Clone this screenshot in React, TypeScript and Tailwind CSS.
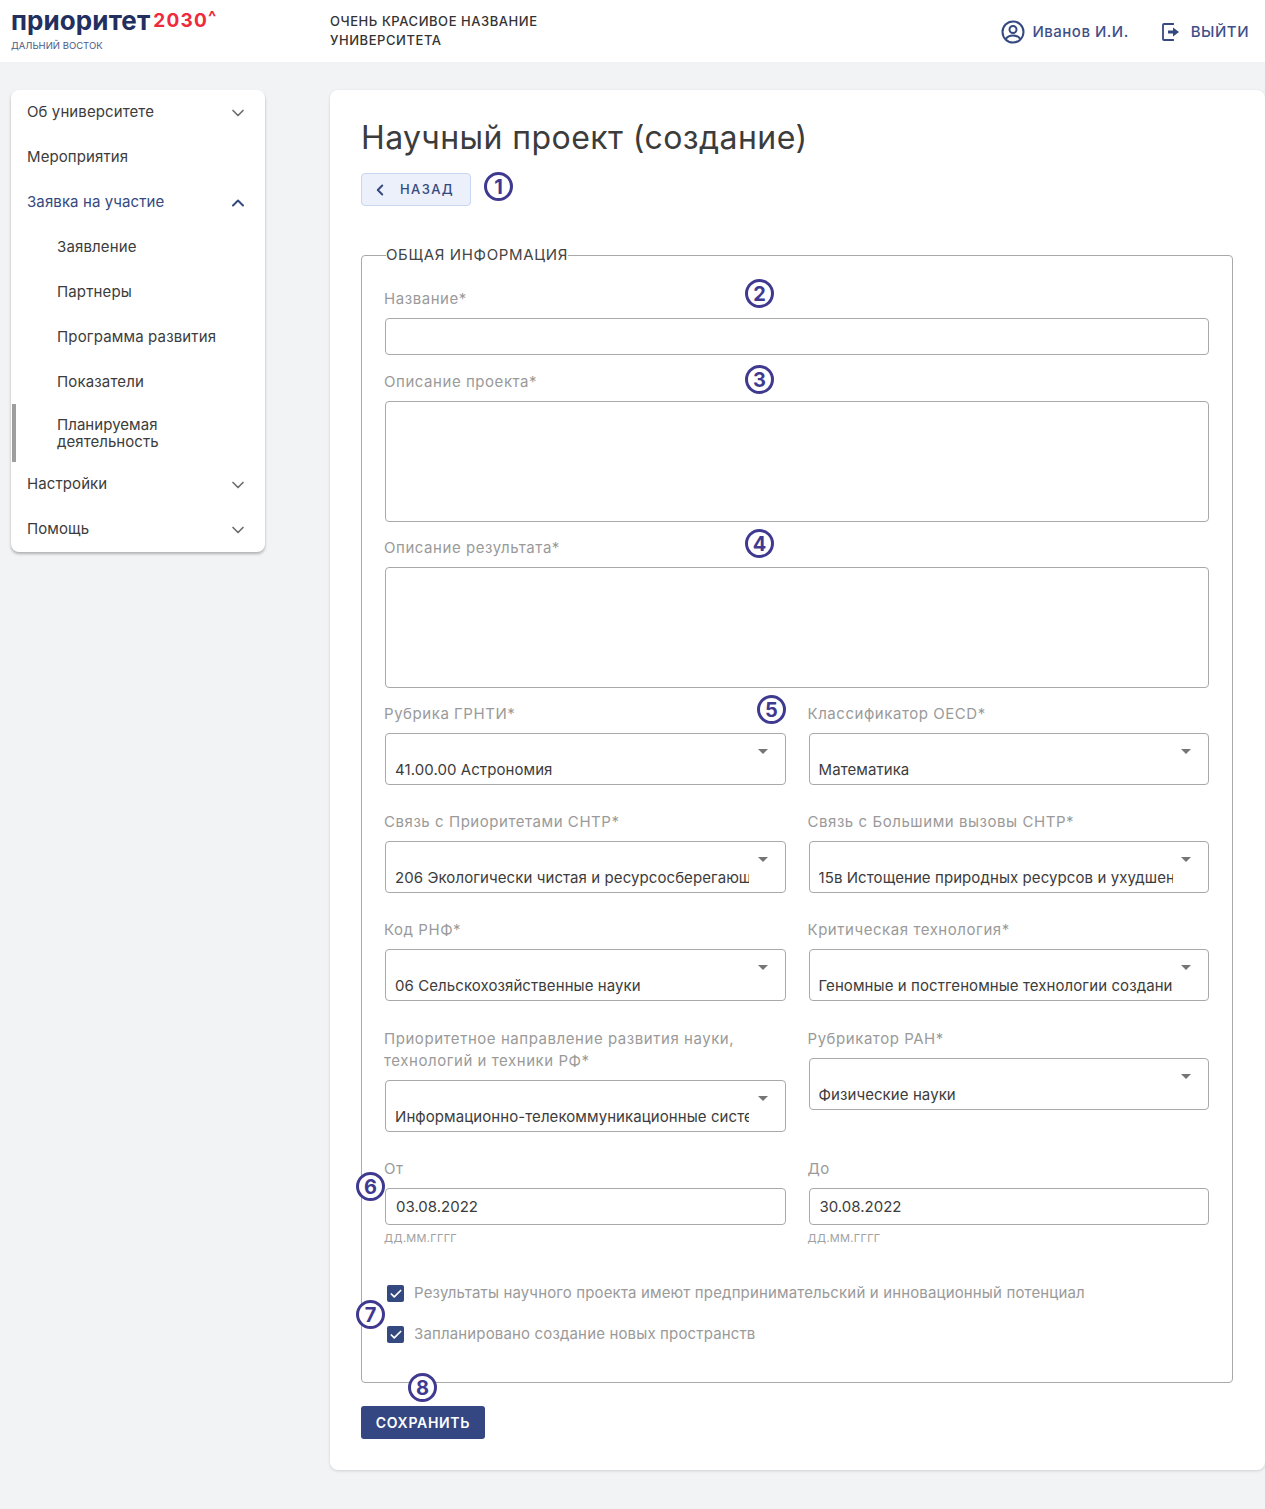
import React from 'react';
import { ChevronDown, ChevronUp, ChevronLeft, Check } from 'lucide-react';

const FONT = "font-['Inter','Noto_Sans',sans-serif]";

const Label = ({ children }: { children: React.ReactNode }) => (
  <div className="-ml-px mb-[8px] pt-px text-[15px] leading-[22px] tracking-[0.55px] text-[#9a9a9a]">{children}</div>
);

const TextField = ({ label }: { label: string }) => (
  <div>
    <Label>{label}</Label>
    <div className="h-[37px] rounded-[4px] border border-[#a9a9a9] bg-white" />
  </div>
);

const TextArea = ({ label }: { label: string }) => (
  <div>
    <Label>{label}</Label>
    <div className="-mb-px h-[121px] rounded-[4px] border border-[#a9a9a9] bg-white" />
  </div>
);

const SelectField = ({ label, value, lower }: { label: React.ReactNode; value: string; lower?: boolean }) => (
  <div className={lower ? 'pt-px' : ''}>
    <Label>{label}</Label>
    <div className="relative h-[52px] rounded-[4px] border border-[#a9a9a9] bg-white">
      <div className="absolute left-[9px] top-[25px] w-[354px] overflow-hidden whitespace-nowrap text-[15px] leading-[22px] tracking-[0.08px] text-[#3c3c3c]">
        {value}
      </div>
      <div className="absolute right-[17px] top-[15px] h-0 w-0 border-x-[5px] border-t-[5px] border-x-transparent border-t-[#757575]" />
    </div>
  </div>
);

const DateField = ({ label, value }: { label: string; value: string }) => (
  <div>
    <Label>{label}</Label>
    <div className="flex h-[37px] items-center rounded-[4px] border border-[#a9a9a9] bg-white pl-[10px] pt-px text-[15px] text-[#3c3c3c]">
      {value}
    </div>
    <div className="-ml-px mt-[5px] text-[11px] leading-[16px] tracking-[0.3px] text-[#a0a0a0]">ДД.ММ.ГГГГ</div>
  </div>
);

const CheckRow = ({ text }: { text: string }) => (
  <div className="flex h-[17px] items-center">
    <div className="ml-[2px] mr-[10px] flex h-[17px] w-[17px] items-center justify-center rounded-[2px] bg-[#34497f]">
      <Check className="h-[14px] w-[14px] text-white" strokeWidth={3} />
    </div>
    <span className="text-[15px] tracking-[0.15px] text-[#9a9a9a]">{text}</span>
  </div>
);

const Mark = ({ n, className }: { n: number; className: string }) => (
  <div
    className={`absolute flex h-[29px] w-[29px] items-center justify-center rounded-full border-[3px] border-[#3f3a90] bg-white text-[20px] font-bold text-[#3f3a90] ${className}`}
  >
    {n}
  </div>
);

const NavItem = ({ text, open, active }: { text: string; open?: boolean; active?: boolean }) => (
  <div className="flex h-[45px] items-center justify-between pl-[16px] pr-[17px]">
    <span className={`text-[15px] tracking-[0.1px] ${active ? 'text-[#34497f]' : 'text-[#3c3c3c]'}`}>{text}</span>
    {open === undefined ? null : open ? (
      <ChevronUp className="h-[20px] w-[20px] text-[#34497f]" strokeWidth={2.4} />
    ) : (
      <ChevronDown className="h-[20px] w-[20px] text-[#6b6b6b]" strokeWidth={2} />
    )}
  </div>
);

const SubItem = ({ text }: { text: string }) => (
  <div className="flex h-[45px] items-center pl-[46px] text-[15px] tracking-[0.15px] text-[#3c3c3c]">{text}</div>
);

export default function App() {
  return (
    <div className={`relative h-[1509px] w-[1265px] overflow-hidden bg-[#f2f3f5] ${FONT}`}>
      {/* Header */}
      <header className="flex h-[62px] bg-white">
        <div className="w-[330px] pl-[11px] pt-[7px]">
          <div className="flex items-start text-[26px] font-bold leading-[28px] text-[#232f5e]">
            <span className="tracking-[0.1px]">приоритет</span>
            <span className="ml-[3px] pt-[2px] text-[19px] font-bold leading-[24px] tracking-[1.2px] text-[#ee2a3c]">2030</span>
            <span className="text-[17px] font-bold leading-[20px] text-[#ee2a3c]">^</span>
          </div>
          <div className="mt-[5px] text-[9.500px] leading-[12px] text-[#4d5a85]">ДАЛЬНИЙ ВОСТОК</div>
        </div>
        <div className="pt-[12px] text-[13px] font-medium leading-[19px] tracking-[0.55px] text-[#333]">
          ОЧЕНЬ КРАСИВОЕ НАЗВАНИЕ
          <br />
          УНИВЕРСИТЕТА
        </div>
        <div className="ml-auto flex items-center pr-[16px] pt-[2px] text-[15px] font-medium tracking-[0.5px] text-[#3f5088]">
          <svg width="24" height="24" viewBox="0 0 24 24" fill="none" stroke="#34497f" strokeWidth="2" className="mr-[7px]">
            <circle cx="12" cy="12" r="10.5" />
            <circle cx="12" cy="9.5" r="3.5" />
            <path d="M4.8 19c1.6-2.6 4.2-3.6 7.2-3.6s5.600 1 7.200 3.600" />
          </svg>
          <span>Иванов И.И.</span>
          <svg width="20" height="20" viewBox="0 0 20 20" fill="none" className="ml-[32px] mr-[10px]">
            <path d="M12 3V2H3a1 1 0 0 0-1 1v14a1 1 0 0 0 1 1h9v-1" stroke="#34497f" strokeWidth="1.800" />
            <path d="M7 8.500h5V5.500l6 4.500-6 4.500v-3H7z" fill="#34497f" />
          </svg>
          <span>ВЫЙТИ</span>
        </div>
      </header>

      <div className="flex items-start pl-[11px] pt-[28px]">
        {/* Sidebar */}
        <nav className="w-[254px] shrink-0 rounded-[8px] bg-white shadow-[0_2px_3px_rgba(0,0,0,0.28)]">
          <NavItem text="Об университете" open={false} />
          <NavItem text="Мероприятия" />
          <NavItem text="Заявка на участие" open active />
          <SubItem text="Заявление" />
          <SubItem text="Партнеры" />
          <SubItem text="Программа развития" />
          <SubItem text="Показатели" />
          <div className="-mt-px ml-[1px] flex h-[58px] items-center border-l-[4px] border-[#9e9e9e] pl-[41px] text-[15px] leading-[17.500px] tracking-[0.05px] text-[#3c3c3c]">
            Планируемая
            <br />
            деятельность
          </div>
          <NavItem text="Настройки" open={false} />
          <NavItem text="Помощь" open={false} />
        </nav>

        {/* Main card */}
        <main className="ml-[65px] h-[1380px] w-[935px] rounded-[8px] bg-white pl-[31px] pr-[32px] pt-[28px] shadow-[0_1px_3px_rgba(0,0,0,0.15)]">
          <h1 className="text-[32px] font-normal leading-[40px] tracking-[0.42px] text-[#3c3c3c]">Научный проект (создание)</h1>
          <button className="mt-[15px] flex h-[33px] w-[110px] items-center rounded-[4px] border border-[#c9d6f0] bg-[#ebf0fb] pl-[9px] text-[13px] font-medium tracking-[1.4px] text-[#34497f]">
            <ChevronLeft className="mr-[11px] h-[18px] w-[18px]" strokeWidth={2.600} />
            НАЗАД
          </button>

          <fieldset className="mt-[39px] h-[1138px] rounded-[4px] border border-[#a9a9a9] px-[23px]">
            <legend className="ml-px p-0 text-[15px] leading-[20px] tracking-[0.65px] text-[#444]">ОБЩАЯ ИНФОРМАЦИЯ</legend>
            <div className="flex flex-col gap-[15px] pt-[22px]">
              <TextField label="Название*" />
              <TextArea label="Описание проекта*" />
              <TextArea label="Описание результата*" />
            </div>
            <div className="mt-[15px] grid grid-cols-2 gap-x-[23px] gap-y-[25px]">
              <SelectField label="Рубрика ГРНТИ*" value="41.00.00 Астрономия" />
              <SelectField label="Классификатор OECD*" value="Математика" />
              <SelectField label="Связь с Приоритетами СНТР*" value="206 Экологически чистая и ресурсосберегающая энергетика" />
              <SelectField label="Связь с Большими вызовы СНТР*" value="15в Истощение природных ресурсов и ухудшение экологии" />
              <SelectField label="Код РНФ*" value="06 Сельскохозяйственные науки" />
              <SelectField label="Критическая технология*" value="Геномные и постгеномные технологии создания" />
              <SelectField
                lower
                label={
                  <>
                    Приоритетное направление развития науки,
                    <br />
                    технологий и техники РФ*
                  </>
                }
                value="Информационно-телекоммуникационные системы"
              />
              <SelectField lower label="Рубрикатор РАН*" value="Физические науки" />
              <DateField label="От" value="03.08.2022" />
              <DateField label="До" value="30.08.2022" />
            </div>
            <div className="mt-[39px] flex flex-col gap-[24px]">
              <CheckRow text="Результаты научного проекта имеют предпринимательский и инновационный потенциал" />
              <CheckRow text="Запланировано создание новых пространств" />
            </div>
          </fieldset>

          <button className="mt-[23px] h-[33px] w-[124px] rounded-[3px] bg-[#344782] text-[14px] font-semibold tracking-[0.7px] text-white">
            СОХРАНИТЬ
          </button>
        </main>
      </div>

      {/* Numbered callouts over the form */}
      <Mark n={1} className="left-[484px] top-[172px]" />
      <Mark n={2} className="left-[745px] top-[279px]" />
      <Mark n={3} className="left-[745px] top-[365px]" />
      <Mark n={4} className="left-[745px] top-[529px]" />
      <Mark n={5} className="left-[757px] top-[695px]" />
      <Mark n={6} className="left-[356px] top-[1172px]" />
      <Mark n={7} className="left-[356px] top-[1300px]" />
      <Mark n={8} className="left-[408px] top-[1373px]" />
    </div>
  );
}
